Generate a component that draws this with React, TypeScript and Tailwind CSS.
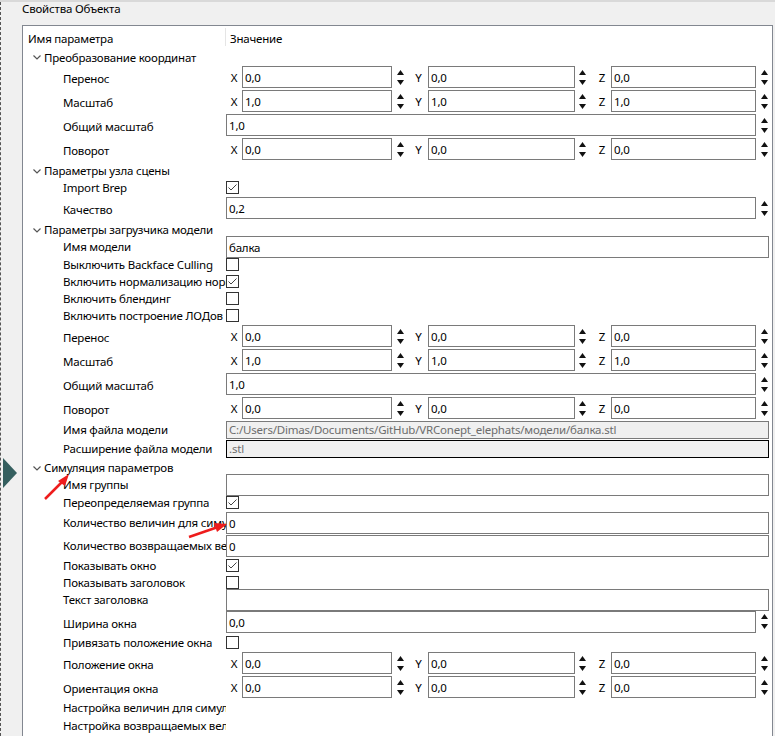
import React from "react";

type Row =
  | { kind: "group"; label: string; h?: string }
  | { kind: "xyz"; label: string; vals: [string, string, string] }
  | { kind: "spin"; label: string; val: string; h?: string }
  | { kind: "line"; label: string; val: string; h?: string }
  | { kind: "check"; label: string; checked: boolean }
  | { kind: "disabled"; label: string; val: string; dark?: boolean }
  | { kind: "text"; label: string };

const rows: Row[] = [
  { kind: "group", label: "Преобразование координат", h: "h-[17px]" },
  { kind: "xyz", label: "Перенос", vals: ["0,0", "0,0", "0,0"] },
  { kind: "xyz", label: "Масштаб", vals: ["1,0", "1,0", "1,0"] },
  { kind: "spin", label: "Общий масштаб", val: "1,0" },
  { kind: "xyz", label: "Поворот", vals: ["0,0", "0,0", "0,0"] },
  { kind: "group", label: "Параметры узла сцены" },
  { kind: "check", label: "Import Brep", checked: true },
  { kind: "spin", label: "Качество", val: "0,2" },
  { kind: "group", label: "Параметры загрузчика модели" },
  { kind: "line", label: "Имя модели", val: "балка" },
  { kind: "check", label: "Выключить Backface Culling", checked: false },
  { kind: "check", label: "Включить нормализацию нормалей", checked: true },
  { kind: "check", label: "Включить блендинг", checked: false },
  { kind: "check", label: "Включить построение ЛОДов", checked: false },
  { kind: "xyz", label: "Перенос", vals: ["0,0", "0,0", "0,0"] },
  { kind: "xyz", label: "Масштаб", vals: ["1,0", "1,0", "1,0"] },
  { kind: "spin", label: "Общий масштаб", val: "1,0" },
  { kind: "xyz", label: "Поворот", vals: ["0,0", "0,0", "0,0"] },
  {
    kind: "disabled",
    label: "Имя файла модели",
    val: "C:/Users/Dimas/Documents/GitHub/VRConept_elephats/модели/балка.stl",
  },
  { kind: "disabled", label: "Расширение файла модели", val: ".stl", dark: true },
  { kind: "group", label: "Симуляция параметров" },
  { kind: "line", label: "Имя группы", val: "" },
  { kind: "check", label: "Переопределяемая группа", checked: true },
  { kind: "line", label: "Количество величин для симуляции", val: "0", h: "h-[23px]" },
  { kind: "line", label: "Количество возвращаемых величин", val: "0", h: "h-[23px]" },
  { kind: "check", label: "Показывать окно", checked: true },
  { kind: "check", label: "Показывать заголовок", checked: false },
  { kind: "line", label: "Текст заголовка", val: "" },
  { kind: "spin", label: "Ширина окна", val: "0,0", h: "h-[25px]" },
  { kind: "check", label: "Привязать положение окна", checked: false },
  { kind: "xyz", label: "Положение окна", vals: ["0,0", "0,0", "0,0"] },
  { kind: "xyz", label: "Ориентация окна", vals: ["0,0", "0,0", "0,0"] },
  { kind: "text", label: "Настройка величин для симуляции" },
  { kind: "text", label: "Настройка возвращаемых величин" },
];

// small vertical nudges so Noto Sans sits where the Segoe UI text does
const nudge = {
  0: "",
  1: "translate-y-[1px]",
  2: "translate-y-[2px]",
};

function T({ children, n = 0 }: { children: React.ReactNode; n?: 0 | 1 | 2 }) {
  return <span className={`inline-block whitespace-nowrap ${nudge[n]}`}>{children}</span>;
}

function Arrows({ w = "w-[16px]" }: { w?: string }) {
  return (
    <div className={`flex h-full shrink-0 flex-col items-center justify-center gap-[5px] ${w}`}>
      <svg width="7" height="5" viewBox="0 0 7 5">
        <path d="M3.5 0 L7 5 L0 5 Z" fill="#111" />
      </svg>
      <svg width="7" height="5" viewBox="0 0 7 5">
        <path d="M0 0 L7 0 L3.5 5 Z" fill="#111" />
      </svg>
    </div>
  );
}

function Box({ val, className = "" }: { val: string; className?: string }) {
  return (
    <div
      className={`flex h-[22px] items-center overflow-hidden whitespace-nowrap border border-[#7a7a7a] bg-white pl-[2px] ${className}`}
    >
      <T n={1}>{val}</T>
    </div>
  );
}

function Check({ checked }: { checked: boolean }) {
  return (
    <div className="flex h-[13px] w-[13px] items-center justify-center border border-[#333] bg-white">
      {checked && (
        <svg width="11" height="11" viewBox="0 0 11 11">
          <polyline points="1.5,5.5 4,8 9.5,2.5" fill="none" stroke="#444" strokeWidth="1" />
        </svg>
      )}
    </div>
  );
}

function Chevron() {
  return (
    <svg width="8" height="5" viewBox="0 0 8 5" className="mr-[3px] mt-[2px]">
      <polyline points="0.5,0.5 4,4 7.5,0.5" fill="none" stroke="#555" strokeWidth="1.2" />
    </svg>
  );
}

function Value({ row }: { row: Row }) {
  switch (row.kind) {
    case "xyz":
      return (
        <div className="flex h-full items-center">
          <span className="w-[16px] shrink-0 text-center">
            <T n={1}>X</T>
          </span>
          <Box val={row.vals[0]} className="w-[150px] shrink-0" />
          <Arrows />
          <span className="w-[20px] shrink-0 pl-[1px] text-center">
            <T n={1}>Y</T>
          </span>
          <Box val={row.vals[1]} className="w-[147px] shrink-0" />
          <Arrows w="w-[15px]" />
          <span className="w-[21px] shrink-0 pl-[3px] text-center">
            <T n={1}>Z</T>
          </span>
          <Box val={row.vals[2]} className="flex-1" />
          <Arrows />
        </div>
      );
    case "spin":
      return (
        <div className="flex h-full items-center">
          <Box val={row.val} className="flex-1" />
          <Arrows />
        </div>
      );
    case "line":
      return (
        <div className="flex h-full items-center pr-[3px]">
          <Box val={row.val} className={`flex-1 ${row.h ? "h-[21px]" : "h-[18px]"}`} />
        </div>
      );
    case "disabled":
      return (
        <div className="flex h-full items-center pr-[3px]">
          <div
            className={`flex h-[18px] flex-1 items-center overflow-hidden whitespace-nowrap bg-[#f0f0f0] pl-[2px] text-[#6d6d6d] ${
              row.dark ? "border border-black" : "border border-[#7a7a7a]"
            }`}
          >
            <T>{row.val}</T>
          </div>
        </div>
      );
    case "check":
      return (
        <div className="flex h-full items-center">
          <Check checked={row.checked} />
        </div>
      );
    default:
      return null;
  }
}

function rowHeight(row: Row) {
  if (row.kind === "xyz") return "h-[24px]";
  if (row.kind === "spin") return row.h ?? "h-[24px]";
  if (row.kind === "check") return "h-[17px]";
  if (row.kind === "line") return row.h ?? "h-[18px]";
  if (row.kind === "disabled") return "h-[19px]";
  if (row.kind === "text") return "h-[18px]";
  return "h-[18px]";
}

function PropRow({ row }: { row: Row }) {
  if (row.kind === "group") {
    return (
      <div className={`flex items-center pl-[10px] text-black ${row.h ?? "h-[18px]"}`}>
        <Chevron />
        <T n={1}>{row.label}</T>
      </div>
    );
  }
  const n = row.kind === "xyz" || row.kind === "spin" ? 2 : 0;
  return (
    <div className={`flex items-center ${rowHeight(row)}`}>
      <div className="w-[203px] shrink-0 overflow-hidden whitespace-nowrap pl-[40px]">
        <T n={n}>{row.label}</T>
      </div>
      <div className="h-full flex-1">
        <Value row={row} />
      </div>
    </div>
  );
}

export default function App() {
  return (
    <div
      className="relative h-[736px] w-[775px] overflow-hidden border-t-2 border-[#d9d9d9] bg-[#f0f0f0] text-[11.5px] tracking-[-0.2px] text-black"
      style={{ fontFamily: '"Noto Sans", "Open Sans", sans-serif' }}
    >
      <div className="flex h-full">
        <div className="flex w-[22px] shrink-0 flex-col border-l border-dashed border-[#555] pt-[456px]">
          <svg width="14" height="30" viewBox="0 0 14 30" className="ml-[2px]">
            <path d="M0 0 L14 15 L0 30 Z" fill="#355f5f" />
          </svg>
        </div>
        <div className="flex min-w-0 flex-1 flex-col">
          <div className="flex h-[23px] items-start leading-[14px]">
            <T>Свойства Объекта</T>
          </div>
          <div className="mr-[2px] flex-1 border-l border-r border-t border-[#828790] bg-white">
            <div className="flex h-[22px] items-center">
              <div className="w-[203px] shrink-0 border-r border-[#e5e5e5] pl-[5px]">
                <T n={2}>Имя параметра</T>
              </div>
              <div className="pl-[4px]">
                <T n={2}>Значение</T>
              </div>
            </div>
            {rows.map((r, i) => (
              <PropRow key={i} row={r} />
            ))}
          </div>
        </div>
      </div>

      <svg className="pointer-events-none absolute left-0 top-0" width="775" height="736">
        <line x1="45" y1="497" x2="64" y2="478" stroke="#ee1c1c" strokeWidth="2.5" />
        <path d="M69 472 L58 479 L65 484 Z" fill="#ee1c1c" />
        <line x1="189" y1="535" x2="218" y2="525" stroke="#ee1c1c" strokeWidth="2.5" />
        <path d="M227 522 L214 521 L217 530 Z" fill="#ee1c1c" />
      </svg>
    </div>
  );
}
